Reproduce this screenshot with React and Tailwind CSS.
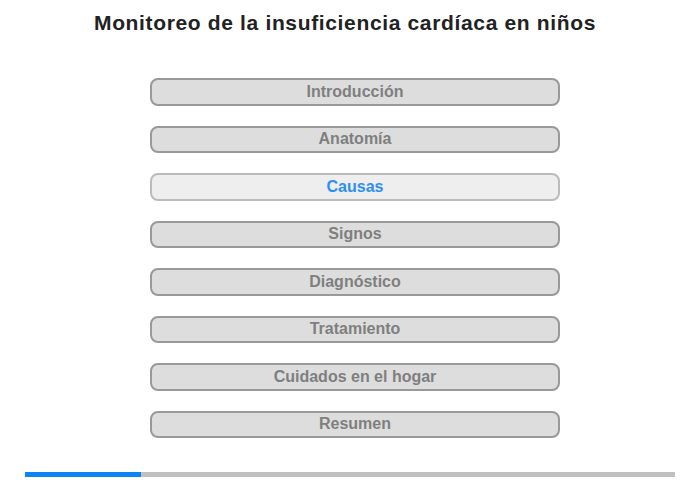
export default function App() {
  const items = [
    "Introducción",
    "Anatomía",
    "Causas",
    "Signos",
    "Diagnóstico",
    "Tratamiento",
    "Cuidados en el hogar",
    "Resumen",
  ];
  return (
    <div className="w-[700px] h-[480px] bg-white font-['Liberation_Sans',Arial,sans-serif] relative">
      <h1 className="pt-[11px] pr-[10px] text-center text-[21px] leading-[23px] tracking-[0.65px] font-bold text-[#222222]">
        Monitoreo de la insuficiencia cardíaca en niños
      </h1>
      <div className="mt-[44px] ml-[150px] w-[410px] flex flex-col gap-[20px]">
        {items.map((t, i) =>
          i === 2 ? (
            <div
              key={t}
              className="h-[27.5px] rounded-[8px] border-2 border-[#bbbbbb] bg-[#eeeeee] flex items-center justify-center text-[16px] font-bold text-[#2f8ff0]"
            >
              {t}
            </div>
          ) : (
            <div
              key={t}
              className="h-[27.5px] rounded-[8px] border-2 border-[#999999] bg-[#dddddd] flex items-center justify-center text-[16px] font-bold text-[#7f7f7f]"
            >
              {t}
            </div>
          )
        )}
      </div>
      <div className="mt-[34px] ml-[25px] w-[650px] h-[5px] bg-[#c0c0c0] flex">
        <div className="w-[116px] h-full bg-[#0a84f4]" />
      </div>
    </div>
  );
}
